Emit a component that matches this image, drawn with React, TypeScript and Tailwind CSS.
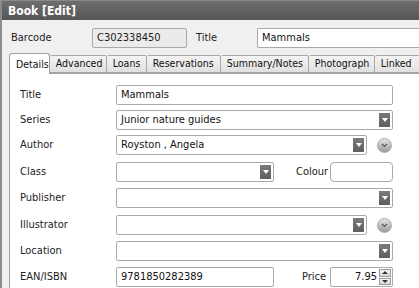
import React from "react";

const font = { fontFamily: '"DejaVu Sans Condensed", "DejaVu Sans", sans-serif' };

function DropBtn() {
  return (
    <div className="absolute right-[2px] top-[2px] bottom-[2px] w-[11px] bg-gradient-to-b from-[#7a7a7a] to-[#5e5e5e] flex items-center justify-center">
      <div className="w-0 h-0 border-l-[3px] border-r-[3px] border-t-[4px] border-l-transparent border-r-transparent border-t-white" />
    </div>
  );
}

function Field({ value = "", width, combo = false }: { value?: string; width: string; combo?: boolean }) {
  return (
    <div className={`relative h-[20px] ${width} bg-white border border-[#a9a9a9] rounded-[2px] flex items-center pl-[4px] text-[11px] text-[#111]`}>
      {value}
      {combo && <DropBtn />}
    </div>
  );
}

function RoundBtn() {
  return (
    <div className="ml-[10px] w-[15px] h-[15px] rounded-full bg-gradient-to-b from-[#e4e4e4] to-[#9c9c9c] border border-[#a8a8a8] flex items-center justify-center">
      <svg width="7" height="5" viewBox="0 0 7 5">
        <path d="M1 1 L3.5 3.5 L6 1" fill="none" stroke="#555" strokeWidth="1.2" />
      </svg>
    </div>
  );
}

function Row({ label, top, children }: { label: string; top: string; children: React.ReactNode }) {
  return (
    <div className={`flex items-center ${top}`}>
      <div className="w-[106px] pl-[10px] text-[11px] text-[#222]">{label}</div>
      {children}
    </div>
  );
}

const tabs = ["Advanced", "Loans", "Reservations", "Summary/Notes", "Photograph", "Linked"];
const tabW = ["w-[57px]", "w-[40px]", "w-[74px]", "w-[88px]", "w-[66px]", "w-[50px]"];

export default function App() {
  return (
    <div className="w-[419px] h-[288px] overflow-hidden bg-[#f0f0f0] border-l-2 border-[#8c8c8c] flex flex-col" style={font}>
      {/* Title bar */}
      <div className="h-[20px] shrink-0 bg-gradient-to-b from-[#6e6e6e] to-[#565656] border-t border-[#8a8a8a] flex items-center pl-[6px] text-white font-bold text-[12px]">
        Book [Edit]
      </div>

      {/* Barcode / Title */}
      <div className="flex items-center mt-[8px] h-[20px] shrink-0">
        <div className="w-[90px] pl-[9px] text-[11px] text-[#222]">Barcode</div>
        <div className="h-[20px] w-[95px] bg-[#ebebeb] border border-[#a9a9a9] rounded-[2px] flex items-center pl-[4px] text-[11px] text-[#222]">
          C302338450
        </div>
        <div className="w-[70px] pl-[9px] text-[11px] text-[#222]">Title</div>
        <div className="h-[20px] flex-1 bg-white border border-[#a9a9a9] border-r-0 rounded-l-[2px] flex items-center pl-[4px] text-[11px] text-[#111]">
          Mammals
        </div>
      </div>

      {/* Tabs */}
      <div className="flex items-end mt-[5px] pl-[7px] h-[20px] shrink-0">
        <div className="relative z-10 h-[21px] w-[47px] bg-white border border-[#a0a0a0] border-b-0 rounded-t-[3px] flex items-start pt-[3px] pl-[6px] text-[10.5px] text-[#111] -mb-px">
          Details
        </div>
        {tabs.map((t, i) => (
          <div
            key={t}
            className={`h-[18px] ${tabW[i]} shrink-0 bg-gradient-to-b from-[#f4f4f4] to-[#e0e0e0] border border-[#a8a8a8] border-l-0 rounded-t-[2px] flex items-center pl-[6px] text-[10.5px] text-[#111]`}
          >
            {t}
          </div>
        ))}
      </div>

      {/* Panel */}
      <div className="ml-[7px] flex-1 bg-white border-l border-t border-[#a0a0a0]">
        <Row label="Title" top="mt-[11px]">
          <Field value="Mammals" width="w-[277px]" />
        </Row>
        <Row label="Series" top="mt-[5px]">
          <Field value="Junior nature guides" width="w-[277px]" combo />
        </Row>
        <Row label="Author" top="mt-[5px]">
          <Field value="Royston , Angela" width="w-[251px]" combo />
          <RoundBtn />
        </Row>
        <Row label="Class" top="mt-[7px]">
          <Field width="w-[158px]" combo />
          <div className="w-[56px] pl-[22px] text-[11px] text-[#222]">Colour</div>
          <div className="h-[20px] w-[63px] bg-white border border-[#a9a9a9] rounded-[4px]" />
        </Row>
        <Row label="Publisher" top="mt-[6px]">
          <Field width="w-[277px]" combo />
        </Row>
        <Row label="Illustrator" top="mt-[7px]">
          <Field width="w-[251px]" combo />
          <RoundBtn />
        </Row>
        <Row label="Location" top="mt-[6px]">
          <Field width="w-[277px]" combo />
        </Row>
        <Row label="EAN/ISBN" top="mt-[6px]">
          <Field value="9781850282389" width="w-[158px]" />
          <div className="w-[56px] pl-[28px] text-[11px] text-[#222]">Price</div>
          <div className="relative h-[20px] w-[63px] bg-white border border-[#a9a9a9] rounded-[2px] flex items-center justify-end pr-[15px] text-[11px] text-[#111]">
            7.95
            <div className="absolute right-[1px] top-[1px] bottom-[1px] w-[12px] flex flex-col gap-px">
              <div className="flex-1 bg-gradient-to-b from-[#f6f6f6] to-[#d8d8d8] border border-[#9a9a9a] flex items-center justify-center">
                <div className="w-0 h-0 border-l-[3px] border-r-[3px] border-b-[3px] border-l-transparent border-r-transparent border-b-[#333]" />
              </div>
              <div className="flex-1 bg-gradient-to-b from-[#f6f6f6] to-[#d8d8d8] border border-[#9a9a9a] flex items-center justify-center">
                <div className="w-0 h-0 border-l-[3px] border-r-[3px] border-t-[3px] border-l-transparent border-r-transparent border-t-[#333]" />
              </div>
            </div>
          </div>
        </Row>
      </div>
    </div>
  );
}
